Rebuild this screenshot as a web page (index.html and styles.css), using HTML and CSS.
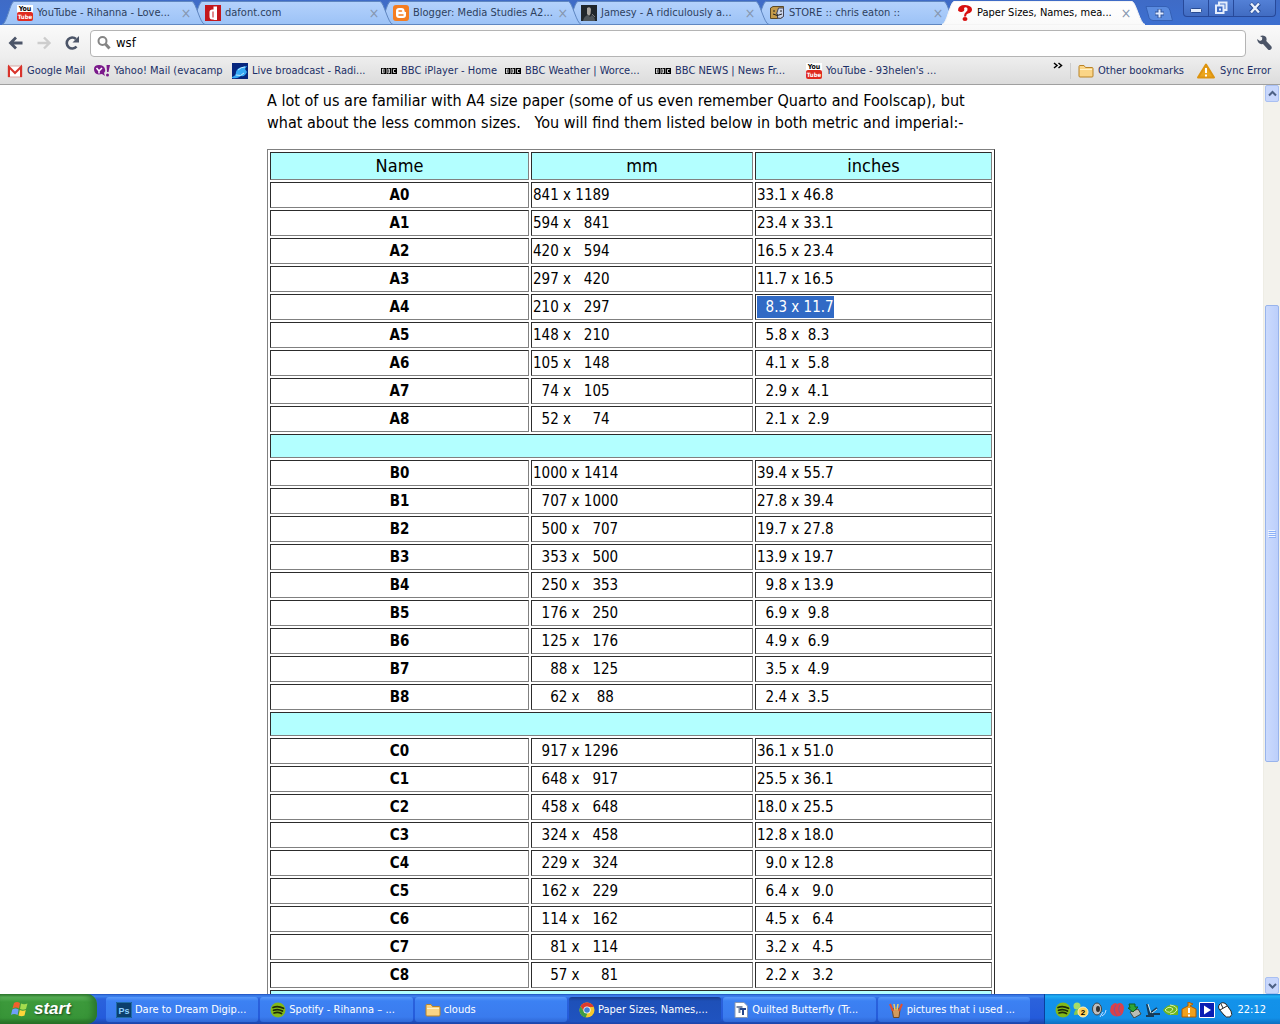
FILE: index.html
```
<!DOCTYPE html>
<html lang="en">
<head>
<meta charset="utf-8">
<title>Paper Sizes, Names, measurements</title>
<link rel="stylesheet" href="styles.css">
</head>
<body>
<svg class="defs" aria-hidden="true">
  <defs>
    <linearGradient id="tabfill" x1="0" y1="0" x2="0" y2="1"><stop offset="0" stop-color="#b4d2fc"/><stop offset="1" stop-color="#9cc2f6"/></linearGradient>
    <linearGradient id="activefill" x1="0" y1="0" x2="0" y2="1"><stop offset="0" stop-color="#ffffff"/><stop offset="1" stop-color="#fafafa"/></linearGradient>
    <symbol id="tabshape" viewBox="0 0 204 25"><path d="M0 24.5C5 24 8 2 12 1.500H190C194 2 198 24 203 24.500Z"/></symbol>
    <symbol id="youtube" viewBox="0 0 16 16"><path fill="#fff" d="M0 0h16v8H0z"/><rect y="7" width="16" height="9" rx="2" fill="#e02a20"/><text x="8" y="6" class="yt-top">You</text><text x="8" y="14" class="yt-bottom">Tube</text></symbol>
    <symbol id="bbc" viewBox="0 0 16 16"><path d="M0 5h5v6H0zM5.500 5h5v6h-5zM11 5h5v6h-5z"/><path d="M1.500 6v4h1.200q1.300-1 0-2q1.300-1 0-2zM7 6v4h1.200q1.300-1 0-2q1.300-1 0-2zM14.500 6.500h-2v3h2" fill="none" stroke="#fff" stroke-width=".8"/></symbol>
    <symbol id="spotify" viewBox="0 0 16 16"><circle cx="8" cy="8" r="7.500" fill="#83b81a"/><path d="M3 5.500q5-2 10.500.8M3.500 8.300q4.500-1.700 9 .7M4 11q4-1.300 7.500.6" fill="none" stroke="#1d2b08" stroke-width="1.700" stroke-linecap="round"/></symbol>
    <symbol id="folder" viewBox="0 0 16 16"><path d="M1 3.500q0-1 1-1h4l1.500 2H14q1 0 1 1v7.500q0 1-1 1H2q-1 0-1-1z" fill="#fbd586" stroke="#b98327"/><path d="M2 6.500h12" stroke="#fff2c9"/></symbol>
  </defs>
</svg>

<header class="chrome">
  <nav class="tabstrip" aria-label="Tabs">
    <div class="tab"><svg class="shape"><use href="#tabshape"/></svg><div class="tab-row"><svg class="icon"><use href="#youtube"/></svg><span>YouTube - Rihanna - Love...</span><button class="close" aria-label="Close tab">×</button></div></div>
    <div class="tab"><svg class="shape"><use href="#tabshape"/></svg><div class="tab-row"><svg class="icon" viewBox="0 0 16 16"><path fill="#c3161c" d="M0 0h16v16H0z"/><path fill="#fff" d="M8.500 1.500H12V15H8.500v-.8q-4 1-4-3V7q0-3 4-2.500zM7.500 6.500v6h1v-6z" fill-rule="evenodd"/></svg><span>dafont.com</span><button class="close" aria-label="Close tab">×</button></div></div>
    <div class="tab"><svg class="shape"><use href="#tabshape"/></svg><div class="tab-row"><svg class="icon" viewBox="0 0 16 16"><rect width="16" height="16" rx="3" fill="#f57d20"/><path d="M3 6q0-3 3-3h2.500q3 0 3 3 0 1 1 1t.5 1v2q0 3-3 3H6q-3 0-3-3z" fill="#fff"/><path d="M6 6h2.500M6 10h4" stroke="#f57d20" stroke-width="1.500" stroke-linecap="round"/></svg><span>Blogger: Media Studies A2...</span><button class="close" aria-label="Close tab">×</button></div></div>
    <div class="tab"><svg class="shape"><use href="#tabshape"/></svg><div class="tab-row"><svg class="icon" viewBox="0 0 16 16"><path fill="#20262b" d="M0 0h16v16H0z"/><path d="M6 3q3-2 4 1l-.5 5L8 11 6 9z" fill="#aaa6a0"/><path d="M2 16q1-5 5-6l2 2 2-2q3 2 3 6z" fill="#4c5358"/><path d="M11 9l3 3" stroke="#777"/></svg><span>Jamesy - A ridiculously a...</span><button class="close" aria-label="Close tab">×</button></div></div>
    <div class="tab"><svg class="shape"><use href="#tabshape"/></svg><div class="tab-row"><svg class="icon" viewBox="0 0 16 16"><path d="M1.500 3L4 1.500h10.500V11L12 13.500H1.500z" fill="#c39a4a" stroke="#5c4925"/><path d="M9.500 3h5v8.500q-3 3-6 1.500V9H7.500z" fill="#c9d3e8" stroke="#445"/><path d="M5 5v2M12 5v2M4 9q4 3 9 0" stroke="#222" fill="none"/></svg><span>STORE :: chris eaton ::</span><button class="close" aria-label="Close tab">×</button></div></div>
    <div class="tab active"><svg class="shape"><use href="#tabshape"/></svg><div class="tab-row"><svg class="icon" viewBox="0 0 16 16"><path d="M1 5.500Q1 0 8 0q7 .5 7 4.500 0 3-4 4-2 .5-2 3H7Q7 8 9 7q2-1.500 1.500-3.500Q9 1.500 7 3q1 3-1.500 3.700Q2 7.500 1 5.500z" fill="#d80f0f"/><ellipse cx="8" cy="14" rx="2.500" ry="2" fill="#d80f0f"/></svg><span>Paper Sizes, Names, mea...</span><button class="close" aria-label="Close tab">×</button></div></div>
    <button class="newtab" aria-label="New tab"><svg viewBox="0 0 28 15"><path d="M1 .5h20q3 0 4 4l2.500 10H8q-3 0-4-3z" fill="#5a8be0" stroke="#3560b5"/><path d="M14.500 3v9M10 7.500h9" stroke="#2f549c" stroke-width="4"/><path d="M14.500 3.500v8M10.500 7.500h8" stroke="#dfeaff" stroke-width="2"/></svg></button>
    <div class="window-buttons">
      <button aria-label="Minimize"><svg viewBox="0 0 14 14"><rect x="1.500" y="7.500" width="11" height="4" rx="1" fill="#e4edfc" stroke="#284b93"/></svg></button>
      <button aria-label="Restore"><svg viewBox="0 0 14 14"><path d="M5 4V1.500h7.500V9H10" fill="none" stroke="#e4edfc" stroke-width="2"/><rect x="2" y="4.500" width="7.500" height="7.500" fill="#3f6cc4" stroke="#e4edfc" stroke-width="2"/><rect x="5" y="7.500" width="2" height="2" fill="#e4edfc"/></svg></button>
      <button aria-label="Close window"><svg viewBox="0 0 14 14"><path d="M2.500 2.500l9 9m0-9l-9 9" stroke="#284b93" stroke-width="4"/><path d="M3 2.500l8 9m0-9l-8 9" stroke="#eaf1fd" stroke-width="2.400"/></svg></button>
    </div>
  </nav>

  <div class="toolbar">
    <button class="tool" aria-label="Back"><svg viewBox="0 0 16 16"><path d="M14.500 8H3M8 2.500L2.500 8 8 13.500" fill="none" stroke="#4c5568" stroke-width="2.800"/></svg></button>
    <button class="tool" aria-label="Forward"><svg viewBox="0 0 16 16"><path d="M1.500 8H13M8 2.500L13.500 8 8 13.500" fill="none" stroke="#cdcdcd" stroke-width="2.400"/></svg></button>
    <button class="tool" aria-label="Reload"><svg viewBox="0 0 16 16"><path d="M12.500 11.500A5.500 5.500 0 1 1 12 4" fill="none" stroke="#4c5568" stroke-width="2.600"/><path d="M15 1v6.500H8.500z" fill="#4c5568"/></svg></button>
    <label class="omnibox"><svg viewBox="0 0 16 16" class="search"><circle cx="6.500" cy="6" r="4" fill="none" stroke="#858585" stroke-width="2"/><path d="M9.500 9l4 4.500" stroke="#858585" stroke-width="3"/></svg><input type="text" value="wsf" aria-label="Address and search"></label>
    <button class="tool wrench" aria-label="Settings"><svg viewBox="0 0 16 16"><path d="M1 4l3 2 2-1 .3-2.500L4 1q4-1.500 6 1 1 2 .3 4l5.200 5.500q.8 2-.8 3t-2.700 0L7 9Q2 10 1 4z" fill="#4c5568"/></svg></button>
  </div>

  <nav class="bookmarks" aria-label="Bookmarks">
    <a href="#"><svg class="icon" viewBox="0 0 16 16"><path d="M1 3h14v11H1z" fill="#fff" stroke="#d9a9a5"/><path d="M2 14V4l6 6 6-6v10" fill="none" stroke="#d9332b" stroke-width="2"/></svg>Google Mail</a>
    <a href="#"><svg class="icon" viewBox="0 0 16 16"><path d="M0 6q0-4 5-4t6 4q1 2-1 4l1 3-3-2Q0 13 0 6z" fill="#7b1a8b"/><path d="M2.500 5L5 8v2.500M8 5L5 8" stroke="#fff" stroke-width="1.500" fill="none"/><path d="M12.500 2H16l-1.500 7h-1.500z" fill="#7b1a8b"/><circle cx="13.500" cy="12" r="1.500" fill="#7b1a8b"/></svg>Yahoo! Mail (evacamp</a>
    <a href="#"><svg class="icon" viewBox="0 0 16 16"><path fill="#06267e" d="M0 0h16v16H0z"/><path d="M0 14q4-1 4-5 1-4 6-5l5-1-2 3 2 3q-2 5-6 4-4 3-9 2z" fill="#35a8f4"/><path d="M6 7q3-3 7-3M4 12q5 2 8-2" stroke="#bfe8ff" fill="none"/></svg>Live broadcast - Radi...</a>
    <a href="#"><svg class="icon"><use href="#bbc"/></svg>BBC iPlayer - Home</a>
    <a href="#"><svg class="icon"><use href="#bbc"/></svg>BBC Weather | Worce...</a>
    <a href="#"><svg class="icon"><use href="#bbc"/></svg>BBC NEWS | News Fr...</a>
    <a href="#"><svg class="icon"><use href="#youtube"/></svg>YouTube - 93helen's ...</a>
    <button class="more" aria-label="More bookmarks"><svg viewBox="0 0 10 8"><path d="M1 1l3 2.500L1 6M5.500 1l3 2.500L5.500 6" fill="none" stroke="#000" stroke-width="1.500"/></svg></button>
    <a href="#" class="other"><svg class="icon"><use href="#folder"/></svg>Other bookmarks</a>
    <a href="#" class="sync"><svg viewBox="0 0 20 16"><path d="M10 1.500L18 14.500H2z" fill="#eba51c" stroke="#dd9410" stroke-width="2" stroke-linejoin="round"/><path d="M10 5v5M10 11.500v2" stroke="#fff" stroke-width="2"/></svg>Sync Error</a>
  </nav>
</header>

<div class="viewport">
<main class="page">
<p class="intro">A lot of us are familiar with A4 size paper (some of us even remember Quarto and Foolscap), but<br>what about the less common sizes. &nbsp; You will find them listed below in both metric and imperial:-</p>
<table class="sizes">
<colgroup><col class="c-name"><col class="c-mm"><col class="c-in"></colgroup>
<thead><tr><th scope="col">Name</th><th scope="col">mm</th><th scope="col">inches</th></tr></thead>
<tbody>
<tr><th scope="row">A0</th><td>841 x 1189</td><td>33.1 x 46.8</td></tr>
<tr><th scope="row">A1</th><td>594 x   841</td><td>23.4 x 33.1</td></tr>
<tr><th scope="row">A2</th><td>420 x   594</td><td>16.5 x 23.4</td></tr>
<tr><th scope="row">A3</th><td>297 x   420</td><td>11.7 x 16.5</td></tr>
<tr><th scope="row">A4</th><td>210 x   297</td><td><mark>  8.3 x 11.7</mark></td></tr>
<tr><th scope="row">A5</th><td>148 x   210</td><td>  5.8 x  8.3</td></tr>
<tr><th scope="row">A6</th><td>105 x   148</td><td>  4.1 x  5.8</td></tr>
<tr><th scope="row">A7</th><td>  74 x   105</td><td>  2.9 x  4.1</td></tr>
<tr><th scope="row">A8</th><td>  52 x     74</td><td>  2.1 x  2.9</td></tr>
<tr class="gap"><td colspan="3"></td></tr>
<tr><th scope="row">B0</th><td>1000 x 1414</td><td>39.4 x 55.7</td></tr>
<tr><th scope="row">B1</th><td>  707 x 1000</td><td>27.8 x 39.4</td></tr>
<tr><th scope="row">B2</th><td>  500 x   707</td><td>19.7 x 27.8</td></tr>
<tr><th scope="row">B3</th><td>  353 x   500</td><td>13.9 x 19.7</td></tr>
<tr><th scope="row">B4</th><td>  250 x   353</td><td>  9.8 x 13.9</td></tr>
<tr><th scope="row">B5</th><td>  176 x   250</td><td>  6.9 x  9.8</td></tr>
<tr><th scope="row">B6</th><td>  125 x   176</td><td>  4.9 x  6.9</td></tr>
<tr><th scope="row">B7</th><td>    88 x   125</td><td>  3.5 x  4.9</td></tr>
<tr><th scope="row">B8</th><td>    62 x    88</td><td>  2.4 x  3.5</td></tr>
<tr class="gap"><td colspan="3"></td></tr>
<tr><th scope="row">C0</th><td>  917 x 1296</td><td>36.1 x 51.0</td></tr>
<tr><th scope="row">C1</th><td>  648 x   917</td><td>25.5 x 36.1</td></tr>
<tr><th scope="row">C2</th><td>  458 x   648</td><td>18.0 x 25.5</td></tr>
<tr><th scope="row">C3</th><td>  324 x   458</td><td>12.8 x 18.0</td></tr>
<tr><th scope="row">C4</th><td>  229 x   324</td><td>  9.0 x 12.8</td></tr>
<tr><th scope="row">C5</th><td>  162 x   229</td><td>  6.4 x   9.0</td></tr>
<tr><th scope="row">C6</th><td>  114 x   162</td><td>  4.5 x   6.4</td></tr>
<tr><th scope="row">C7</th><td>    81 x   114</td><td>  3.2 x   4.5</td></tr>
<tr><th scope="row">C8</th><td>    57 x     81</td><td>  2.2 x   3.2</td></tr>
<tr class="gap"><td colspan="3"></td></tr>
</tbody>
</table>
</main>
<aside class="scrollbar" aria-label="Scrollbar">
  <button aria-label="Scroll up"><svg viewBox="0 0 9 9"><path d="M1 6.500L4.500 3 8 6.500" fill="none" stroke="#4d6185" stroke-width="2"/></svg></button>
  <div class="track"><div class="before"></div><div class="thumb"><svg viewBox="0 0 8 8"><path d="M0 .5h7M0 2.500h7M0 4.500h7M0 6.500h7" stroke="#eef4fe"/><path d="M1 1.500h7M1 3.500h7M1 5.500h7M1 7.500h7" stroke="#8cb0f8"/></svg></div><div class="after"></div></div>
  <button aria-label="Scroll down"><svg viewBox="0 0 9 9"><path d="M1 3L4.500 6.500 8 3" fill="none" stroke="#4d6185" stroke-width="2"/></svg></button>
</aside>
</div>

<footer class="taskbar">
  <button class="start"><svg viewBox="0 0 18 18"><path d="M3 3q3-2 6 0L8 8.500q-3-2-6.500 0z" fill="#f0602e"/><path d="M10 3.500q3 1.500 6.500 0L15 9q-3 1.500-6 0z" fill="#a4dc4e"/><path d="M1.300 9.500q3-2 6.300 0l-1 5.500Q3 13 0 15z" fill="#6f9ff8"/><path d="M8.800 10q3 1.500 6 0l-1.300 5.500q-3 1.500-6 0z" fill="#ffd53a"/></svg>start</button>
  <div class="tasks">
    <button><svg class="icon" viewBox="0 0 16 16"><path fill="#0b3f6c" d="M0 0h16v16H0z"/><path fill="none" stroke="#1f6ba6" d="M.5.500h15v15H.5z"/><text x="8" y="12" class="ps">Ps</text></svg><span>Dare to Dream Digip...</span></button>
    <button><svg class="icon"><use href="#spotify"/></svg><span>Spotify - Rihanna – ...</span></button>
    <button><svg class="icon"><use href="#folder"/></svg><span>clouds</span></button>
    <button class="current"><svg class="icon" viewBox="0 0 16 16"><circle cx="8" cy="8" r="7.500" fill="#f6c92c"/><path d="M1.500 4.200A7.500 7.500 0 0 1 14.800 5H8L5 9.500z" fill="#dc3b2e"/><path d="M1.500 4.200L5.500 10.500 8.500 11l-1.800 4.400A7.500 7.500 0 0 1 1.500 4.200z" fill="#3f9c46"/><circle cx="8" cy="8" r="3.600" fill="#fff"/><circle cx="8" cy="8" r="2.800" fill="#3f7fd8"/></svg><span>Paper Sizes, Names,...</span></button>
    <button><svg class="icon" viewBox="0 0 16 16"><path d="M2 .5h9l3.500 3.500v11.500H2z" fill="#fff" stroke="#8899b5"/><path d="M3.500 5h6M6.500 5v6" stroke="#7b8aa5" stroke-width="2"/><path d="M7 7h6M10 7v6" stroke="#26488e" stroke-width="2"/></svg><span>Quilted Butterfly (Tr...</span></button>
    <button><svg class="icon" viewBox="0 0 16 16"><path d="M4 7h8l-1 8.500H5.500z" fill="#d39a5c" stroke="#6d4827"/><path d="M5 9L2 2M11 9l3-7" stroke="#e2502e" stroke-width="2"/><path d="M7 8L6 2M9 8l1-6" stroke="#f0d060" stroke-width="1.500"/></svg><span>pictures that i used ...</span></button>
  </div>
  <div class="tray">
    <svg class="icon"><use href="#spotify"/></svg>
    <svg class="icon" viewBox="0 0 16 16"><circle cx="4" cy="4" r="3.500" fill="#a7dc67"/><path d="M1 13q0-6 5-6t5 5z" fill="#8bc94c"/><circle cx="10" cy="10" r="5" fill="#ffd257" stroke="#fff3c0"/><text x="10" y="13" class="badge">2</text></svg>
    <svg class="icon" viewBox="0 0 16 16"><ellipse cx="6" cy="7" rx="4.500" ry="6" fill="#bdbdbd" stroke="#444"/><ellipse cx="7" cy="7" rx="2" ry="3" fill="#333"/><path d="M11 14q4-2 4-6M9 15l3-5" stroke="#c3dcff" fill="none"/></svg>
    <svg class="icon" viewBox="0 0 16 16"><path d="M2 4q4-5 6-2 5-3 7 3 0 7-4 9-8 2-10-5z" fill="#d9414c"/><path d="M7 3q-4 5 1 11M11 3q-3 5 1 9" stroke="#7e5596" fill="none"/></svg>
    <svg class="icon" viewBox="0 0 16 16"><path d="M3 10l8-3 3 5-7 4z" fill="#b9bdb5" stroke="#454a42"/><path d="M2 2h6v3h3L6 10 1 6h2z" fill="#2fa637" stroke="#135d1b"/></svg>
    <svg class="icon" viewBox="0 0 16 16"><path d="M2 2l2 10h11M4 12l8-6M1 14h8" stroke="#173b58" stroke-width="2" fill="none"/><path d="M3 2l3 9M7 11l5-4" stroke="#d5e6e8" fill="none"/></svg>
    <svg class="icon" viewBox="0 0 16 16"><path d="M0 8q6-8 15-4v9H6q-4-1-6-5z" fill="#6eb51e"/><path d="M2 8q4-5 8-1-3 6-8 1zM7 3q7 1 7 5-2 4-7 4" stroke="#d8f0b0" fill="none"/></svg>
    <svg class="icon" viewBox="0 0 16 16"><path d="M1 7l6-3V0l5 2-3 2 6 3v8H1z" fill="#f0a01c" stroke="#a95f08"/><path d="M8 6v5M8 12.500v2" stroke="#fff" stroke-width="2"/></svg>
    <svg class="icon" viewBox="0 0 16 16"><path d="M.5.500h15v15H.5z" fill="#0a1fb4" stroke="#fff"/><path d="M5 3.500l7 4.500-7 4.500z" fill="#fff"/></svg>
    <svg class="icon" viewBox="0 0 16 16"><path d="M2 3q3-4 7-1l5 7q2 4-1 6-4 1-6-2L2 7q-1-2 0-4z" fill="#fff" stroke="#222"/><path d="M3 8l7-4M6 6L4 2" stroke="#222"/></svg>
    <time>22:12</time>
  </div>
</footer>
</body>
</html>
```
FILE: styles.css
```
* { box-sizing: border-box; }

body {
  margin: 0;
  height: 100vh;
  display: flex;
  flex-direction: column;
  overflow: hidden;
  background: #fff;
  font: 11px/16px "DejaVu Sans Condensed", "DejaVu Sans", sans-serif;
  color: #000;
}

button {
  margin: 0;
  padding: 0;
  border: 0;
  background: none;
  font: inherit;
  color: inherit;
}

a { color: inherit; text-decoration: none; }
svg { display: block; flex: none; }
.defs { position: absolute; width: 0; height: 0; }
.icon { width: 16px; height: 16px; }

.yt-top { font: bold 7px "DejaVu Sans Condensed", sans-serif; text-anchor: middle; }
.yt-bottom { font: bold 6px "DejaVu Sans Condensed", sans-serif; text-anchor: middle; fill: #fff; }
.ps { font: bold 9px "Liberation Sans", sans-serif; text-anchor: middle; fill: #8fd0ff; }
.badge { font: bold 8px "Liberation Sans", sans-serif; text-anchor: middle; }

/* Tab strip */
.tabstrip {
  display: flex;
  height: 25px;
  padding-left: 2px;
  background: linear-gradient(#3f6bc6, #3c6fd0);
}
.tab {
  display: grid;
  position: relative;
  width: 204px;
  margin-right: -16px;
  color: #2d3f5e;
}
.tab > * { grid-area: 1 / 1; }
/* Each tab overlaps the one on its right; the active tab is on top. */
.tab:nth-child(1) { z-index: 5; }
.tab:nth-child(2) { z-index: 4; }
.tab:nth-child(3) { z-index: 3; }
.tab:nth-child(4) { z-index: 2; }
.tab:nth-child(5) { z-index: 1; }
.tab.active { z-index: 6; color: #000; }
.shape {
  width: 100%;
  height: 25px;
  fill: url(#tabfill);
  stroke: #5f86c0;
}
.active .shape { fill: url(#activefill); stroke: #f4f4f4; }
.tab-row {
  display: flex;
  align-items: center;
  padding: 1px 14px 0 15px;
  gap: 4px;
  white-space: nowrap;
}
.close {
  margin-left: auto;
  width: 12px;
  font-size: 14px;
  line-height: 16px;
  color: #8596ad;
}
.newtab { margin: 6px 0 0 15px; align-self: flex-start; }
.newtab svg { width: 28px; height: 15px; }
.window-buttons {
  display: flex;
  margin-left: auto;
  margin-right: 4px;
  height: 17px;
  border: 1px solid #27499a;
  border-top: 0;
  border-radius: 0 0 4px 4px;
  background: linear-gradient(#5380d6, #416cc2);
}
.window-buttons button {
  width: 25px;
  display: grid;
  place-items: center;
  border-right: 1px solid #27499a;
}
.window-buttons button:last-child { width: 41px; border: 0; }
.window-buttons svg { width: 14px; height: 14px; }

/* Toolbar */
.toolbar {
  display: flex;
  align-items: center;
  height: 32px;
  padding: 4px 8px 0;
  background: linear-gradient(#fafafa, #eee);
}
.tool { width: 16px; margin-right: 12px; }
.tool svg { width: 16px; height: 16px; }
.omnibox {
  flex: 1;
  display: flex;
  align-items: center;
  gap: 4px;
  height: 27px;
  margin-left: -2px;
  padding: 0 5px;
  background: #fff;
  border: 1px solid #b4b4b4;
  border-radius: 4px;
}
.search { width: 16px; height: 16px; }
.omnibox input {
  flex: 1;
  border: 0;
  padding: 0;
  outline: 0;
  background: none;
  font: 13px/20px "DejaVu Sans Condensed", sans-serif;
}
.wrench { margin: 0 0 0 10px; }

/* Bookmarks bar */
.bookmarks {
  display: grid;
  grid-template-columns: 87px 138px 149px 124px 150px 151px 1fr auto 126px 78px;
  align-items: center;
  height: 28px;
  padding: 0 6px 0 7px;
  background: linear-gradient(#eee, #dcdcdc);
  border-bottom: 1px solid #a0a0a0;
  color: #1b2f66;
}
.bookmarks a { display: flex; align-items: center; gap: 4px; white-space: nowrap; }
.more { align-self: start; margin: 5px 7px 0 0; }
.more svg { width: 10px; height: 8px; }
.bookmarks .other { padding-left: 7px; border-left: 1px solid #ccc; }
.sync svg { width: 20px; height: 16px; }

/* Page */
.viewport { flex: 1; min-height: 0; display: flex; }
.page { flex: 1; overflow: hidden; padding: 5px 1px 0 0; }
.intro, .sizes { width: 728px; margin: 0 auto; }
.intro {
  margin-bottom: 15px;
  font-size: 16px;
  line-height: 22px;
  white-space: nowrap;
}
.sizes {
  table-layout: fixed;
  border: 1px solid;
  border-color: #808080 #2c2c2c #2c2c2c #808080;
  border-spacing: 2px;
  font-size: 15px;
  line-height: 22px;
}
.c-name { width: 259px; }
.c-mm { width: 222px; }
.sizes th, .sizes td {
  height: 26px;
  padding: 1px;
  border: 1px solid;
  border-color: #2c2c2c #808080 #808080 #2c2c2c;
  white-space: pre;
}
.sizes thead th {
  height: 28px;
  background: #b3ffff;
  font-size: 18px;
  font-weight: normal;
}
.sizes .gap td { height: 24px; background: #b3ffff; }
mark { display: inline-block; vertical-align: top; background: #316ac5; color: #fff; }

/* Scrollbar */
.scrollbar {
  width: 17px;
  display: flex;
  flex-direction: column;
  background: #f3f2ec;
  border-left: 1px solid #eeede5;
}
.scrollbar button {
  display: grid;
  place-items: center;
  height: 17px;
  margin: 0 1px;
  border: 1px solid #a9c0f2;
  border-radius: 2px;
  background: #c8d7fc;
}
.scrollbar button svg { width: 9px; height: 9px; }
.track { flex: 1; display: flex; flex-direction: column; }
.before { flex: 203; }
.thumb {
  flex: 457;
  display: grid;
  place-items: center;
  margin: 0 1px;
  border: 1px solid #98b4ec;
  border-radius: 2px;
  background: linear-gradient(90deg, #cbdafd, #bccffb);
}
.thumb svg { width: 8px; height: 8px; }
.after { flex: 215; }

/* Taskbar */
.taskbar {
  display: flex;
  height: 30px;
  background: linear-gradient(#1f4fbd 0, #3f84f0 2px, #2b62dc 5px, #245bdb 24px, #1b44a8 30px);
  color: #fff;
}
.start {
  display: flex;
  align-items: center;
  gap: 5px;
  width: 97px;
  padding-left: 11px;
  border-radius: 0 10px 10px 0;
  background: linear-gradient(#2f7a2f 0, #5cb45a 3px, #3c993b 8px, #389538 24px, #236b25 30px);
  box-shadow: inset -4px 0 6px #2a752b;
  font: italic bold 17px/20px "Liberation Sans", sans-serif;
  text-shadow: 1px 1px 2px #1d4a1d;
}
.start svg { width: 18px; height: 18px; }
.tasks { flex: 1; display: flex; gap: 2px; padding: 3px 14px 2px 9px; }
.tasks button {
  flex: 1 1 0;
  min-width: 0;
  display: flex;
  align-items: center;
  gap: 3px;
  padding-left: 10px;
  border-radius: 3px;
  background: linear-gradient(#5a9afa 0, #3c81f3 4px, #3a7bee 20px, #2f68d6 25px);
  white-space: nowrap;
}
.tasks .current { background: linear-gradient(#173a8c, #1e50b8 4px, #1f53c0); }
.tray {
  display: flex;
  align-items: center;
  gap: 2px;
  width: 236px;
  padding: 1px 0 0 10px;
  border-left: 1px solid #0a3f9c;
  background: linear-gradient(#0f6fc4 0, #1fb0f5 2px, #1392ea 6px, #1290e8 24px, #0d6fc0 30px);
}
.tray time { margin: 0 14px 0 auto; }
```
